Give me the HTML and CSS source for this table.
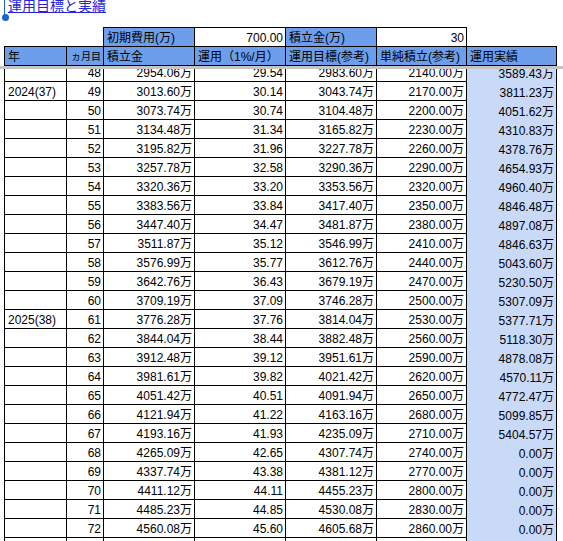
FILE: index.html
```html
<!DOCTYPE html>
<html lang="ja">
<head>
<meta charset="utf-8">
<title>運用目標と実績</title>
<link rel="stylesheet" href="styles.css">
</head>
<body>
<div class="title-bar">
  <a class="title" href="#">運用目標と実績</a>
  <span class="cursor"></span>
  <span class="handle"></span>
</div>

<div class="head">
  <div class="row r1">
    <div class="c blank"></div>
    <div class="c blank edge"></div>
    <div class="c hd top">初期費用(万)</div>
    <div class="c num top">700.00</div>
    <div class="c hd top">積立金(万)</div>
    <div class="c num top">30</div>
    <div class="c blank"></div>
  </div>
  <div class="row r2">
    <div class="c hd">年</div>
    <div class="c hd small">ヵ月目</div>
    <div class="c hd">積立金</div>
    <div class="c hd">運用（1%/月）</div>
    <div class="c hd">運用目標(参考)</div>
    <div class="c hd">単純積立(参考)</div>
    <div class="c hd">運用実績</div>
  </div>
</div>

<div class="freeze"></div>

<div class="data">
  <div class="rows">
    <div class="row"><div class="c"></div><div class="c num">48</div><div class="c num">2954.06万</div><div class="c num">29.54</div><div class="c num">2983.60万</div><div class="c num">2140.00万</div><div class="c num g">3589.43万</div></div>
    <div class="row"><div class="c">2024(37)</div><div class="c num">49</div><div class="c num">3013.60万</div><div class="c num">30.14</div><div class="c num">3043.74万</div><div class="c num">2170.00万</div><div class="c num g">3811.23万</div></div>
    <div class="row"><div class="c"></div><div class="c num">50</div><div class="c num">3073.74万</div><div class="c num">30.74</div><div class="c num">3104.48万</div><div class="c num">2200.00万</div><div class="c num g">4051.62万</div></div>
    <div class="row"><div class="c"></div><div class="c num">51</div><div class="c num">3134.48万</div><div class="c num">31.34</div><div class="c num">3165.82万</div><div class="c num">2230.00万</div><div class="c num g">4310.83万</div></div>
    <div class="row"><div class="c"></div><div class="c num">52</div><div class="c num">3195.82万</div><div class="c num">31.96</div><div class="c num">3227.78万</div><div class="c num">2260.00万</div><div class="c num g">4378.76万</div></div>
    <div class="row"><div class="c"></div><div class="c num">53</div><div class="c num">3257.78万</div><div class="c num">32.58</div><div class="c num">3290.36万</div><div class="c num">2290.00万</div><div class="c num g">4654.93万</div></div>
    <div class="row"><div class="c"></div><div class="c num">54</div><div class="c num">3320.36万</div><div class="c num">33.20</div><div class="c num">3353.56万</div><div class="c num">2320.00万</div><div class="c num g">4960.40万</div></div>
    <div class="row"><div class="c"></div><div class="c num">55</div><div class="c num">3383.56万</div><div class="c num">33.84</div><div class="c num">3417.40万</div><div class="c num">2350.00万</div><div class="c num g">4846.48万</div></div>
    <div class="row"><div class="c"></div><div class="c num">56</div><div class="c num">3447.40万</div><div class="c num">34.47</div><div class="c num">3481.87万</div><div class="c num">2380.00万</div><div class="c num g">4897.08万</div></div>
    <div class="row"><div class="c"></div><div class="c num">57</div><div class="c num">3511.87万</div><div class="c num">35.12</div><div class="c num">3546.99万</div><div class="c num">2410.00万</div><div class="c num g">4846.63万</div></div>
    <div class="row"><div class="c"></div><div class="c num">58</div><div class="c num">3576.99万</div><div class="c num">35.77</div><div class="c num">3612.76万</div><div class="c num">2440.00万</div><div class="c num g">5043.60万</div></div>
    <div class="row"><div class="c"></div><div class="c num">59</div><div class="c num">3642.76万</div><div class="c num">36.43</div><div class="c num">3679.19万</div><div class="c num">2470.00万</div><div class="c num g">5230.50万</div></div>
    <div class="row"><div class="c"></div><div class="c num">60</div><div class="c num">3709.19万</div><div class="c num">37.09</div><div class="c num">3746.28万</div><div class="c num">2500.00万</div><div class="c num g">5307.09万</div></div>
    <div class="row"><div class="c">2025(38)</div><div class="c num">61</div><div class="c num">3776.28万</div><div class="c num">37.76</div><div class="c num">3814.04万</div><div class="c num">2530.00万</div><div class="c num g">5377.71万</div></div>
    <div class="row"><div class="c"></div><div class="c num">62</div><div class="c num">3844.04万</div><div class="c num">38.44</div><div class="c num">3882.48万</div><div class="c num">2560.00万</div><div class="c num g">5118.30万</div></div>
    <div class="row"><div class="c"></div><div class="c num">63</div><div class="c num">3912.48万</div><div class="c num">39.12</div><div class="c num">3951.61万</div><div class="c num">2590.00万</div><div class="c num g">4878.08万</div></div>
    <div class="row"><div class="c"></div><div class="c num">64</div><div class="c num">3981.61万</div><div class="c num">39.82</div><div class="c num">4021.42万</div><div class="c num">2620.00万</div><div class="c num g">4570.11万</div></div>
    <div class="row"><div class="c"></div><div class="c num">65</div><div class="c num">4051.42万</div><div class="c num">40.51</div><div class="c num">4091.94万</div><div class="c num">2650.00万</div><div class="c num g">4772.47万</div></div>
    <div class="row"><div class="c"></div><div class="c num">66</div><div class="c num">4121.94万</div><div class="c num">41.22</div><div class="c num">4163.16万</div><div class="c num">2680.00万</div><div class="c num g">5099.85万</div></div>
    <div class="row"><div class="c"></div><div class="c num">67</div><div class="c num">4193.16万</div><div class="c num">41.93</div><div class="c num">4235.09万</div><div class="c num">2710.00万</div><div class="c num g">5404.57万</div></div>
    <div class="row"><div class="c"></div><div class="c num">68</div><div class="c num">4265.09万</div><div class="c num">42.65</div><div class="c num">4307.74万</div><div class="c num">2740.00万</div><div class="c num g">0.00万</div></div>
    <div class="row"><div class="c"></div><div class="c num">69</div><div class="c num">4337.74万</div><div class="c num">43.38</div><div class="c num">4381.12万</div><div class="c num">2770.00万</div><div class="c num g">0.00万</div></div>
    <div class="row"><div class="c"></div><div class="c num">70</div><div class="c num">4411.12万</div><div class="c num">44.11</div><div class="c num">4455.23万</div><div class="c num">2800.00万</div><div class="c num g">0.00万</div></div>
    <div class="row"><div class="c"></div><div class="c num">71</div><div class="c num">4485.23万</div><div class="c num">44.85</div><div class="c num">4530.08万</div><div class="c num">2830.00万</div><div class="c num g">0.00万</div></div>
    <div class="row"><div class="c"></div><div class="c num">72</div><div class="c num">4560.08万</div><div class="c num">45.60</div><div class="c num">4605.68万</div><div class="c num">2860.00万</div><div class="c num g">0.00万</div></div>
    <div class="row"><div class="c"></div><div class="c num"></div><div class="c num"></div><div class="c num"></div><div class="c num"></div><div class="c num"></div><div class="c num g"></div></div>
  </div>
</div>
</body>
</html>
```

FILE: styles.css
```css
* {
  box-sizing: border-box;
}

html,
body {
  margin: 0;
  padding: 0;
  background: #ffffff;
  overflow: hidden;
}

body {
  width: 563px;
  height: 541px;
  font-family: "Liberation Sans", Arial, "Noto Sans CJK JP", sans-serif;
  font-size: 12px;
  color: #000000;
}

/* ---------- title ---------- */
.title-bar {
  position: relative;
  height: 27px;
  overflow: hidden;
}

.title {
  display: block;
  width: max-content;
  margin: -1px 0 0 8px;
  font-size: 14px;
  line-height: 14px;
  color: #2424dc;
  text-decoration: underline;
}

.cursor {
  position: absolute;
  left: 4px;
  top: 0;
  width: 1px;
  height: 15px;
  background: #1a62d6;
}

.handle {
  position: absolute;
  left: 2px;
  top: 14px;
  width: 7px;
  height: 7px;
  border-radius: 50%;
  background: #1a62d6;
}

/* ---------- grid rows ---------- */
.row {
  display: grid;
  grid-template-columns: 63px 37px 91px 91px 91px 90px 90px;
  margin-left: 4px;
}

.c {
  display: flex;
  align-items: flex-end;
  height: 19px;
  padding: 0 2px 1px 3px;
  line-height: 14px;
  white-space: nowrap;
  overflow: hidden;
  border-right: 1px solid #000000;
  border-bottom: 1px solid #000000;
}

.row > .c:first-child {
  border-left: 1px solid #000000;
}

.num {
  justify-content: flex-end;
}

.g {
  background: #c9daf8;
  border-bottom: none;
}

/* ---------- header ---------- */
.hd {
  background: #6d9eeb;
}

.r1 .c {
  border-bottom: none;
}

.r1 .blank {
  border: none;
}

.r1 > .c:first-child {
  border-left: none;
}

.r1 .edge {
  border-right: 1px solid #000000;
}

.r1 .top {
  border-top: 1px solid #000000;
}

.r2 .c {
  height: 20px;
  border-top: 1px solid #000000;
}

.small {
  font-size: 10px;
  padding-left: 4px;
}

/* ---------- frozen divider ---------- */
.freeze {
  height: 3px;
  background: #c4c4c4;
}

/* ---------- scrolled data area ---------- */
.data {
  height: 472px;
  overflow: hidden;
}

.rows {
  margin-top: -6px;
}
```
